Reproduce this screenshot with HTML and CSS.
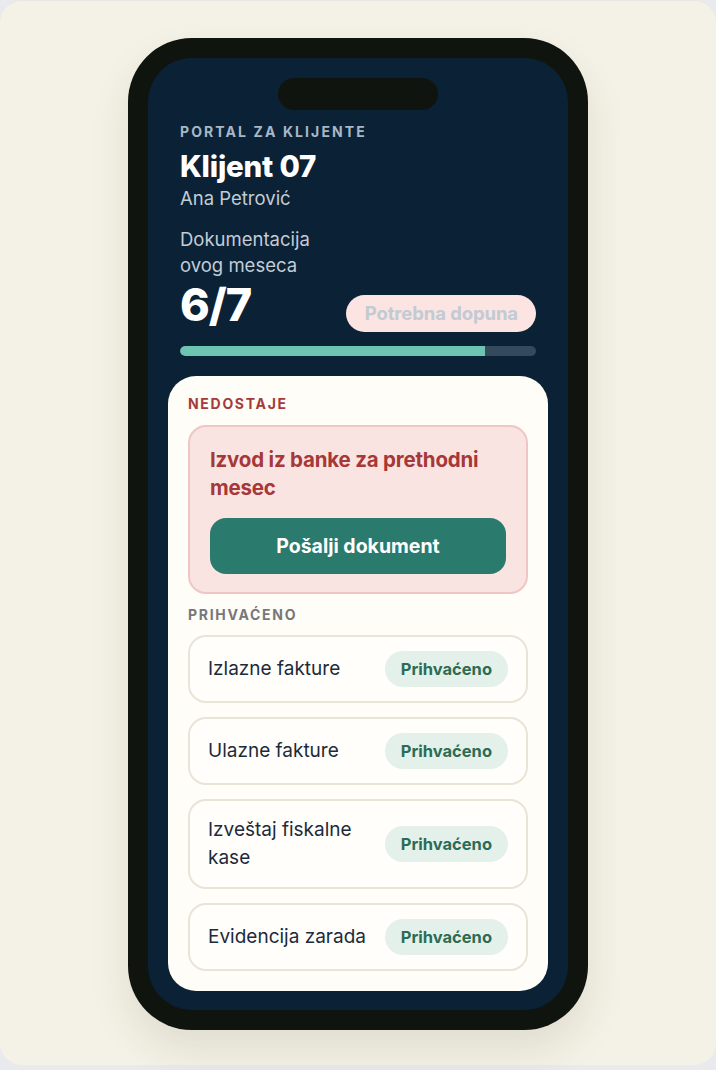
FILE: index.html
```html
<!DOCTYPE html>
<html lang="sr">
<head>
<meta charset="utf-8">
<title>Portal za klijente</title>
<link rel="stylesheet" href="styles.css">
</head>
<body>
<div class="stage">
  <div class="phone">
    <div class="screen">
      <div class="notch"></div>
      <header class="head">
        <div class="eyebrow">PORTAL ZA KLIJENTE</div>
        <h1 class="client">Klijent 07</h1>
        <div class="person">Ana Petrović</div>
        <div class="stat-row">
          <div class="stat">
            <div class="stat-label">Dokumentacija ovog meseca</div>
            <div class="stat-value">6/7</div>
          </div>
          <div class="status">Potrebna dopuna</div>
        </div>
        <div class="bar"><div class="bar-fill" style="width:85.7%"></div></div>
      </header>
      <main class="card">
        <div class="section missing-title">NEDOSTAJE</div>
        <div class="missing">
          <div class="missing-name">Izvod iz banke za prethodni mesec</div>
          <button class="send">Pošalji dokument</button>
        </div>
        <div class="section ok-title">PRIHVAĆENO</div>
        <div class="list">
          <div class="row"><span class="row-name">Izlazne fakture</span><span class="pill">Prihvaćeno</span></div>
          <div class="row"><span class="row-name">Ulazne fakture</span><span class="pill">Prihvaćeno</span></div>
          <div class="row"><span class="row-name">Izveštaj fiskalne kase</span><span class="pill">Prihvaćeno</span></div>
          <div class="row"><span class="row-name">Evidencija zarada</span><span class="pill">Prihvaćeno</span></div>
        </div>
      </main>
    </div>
  </div>
</div>
</body>
</html>
```

FILE: styles.css
```css
* { box-sizing: border-box; }
html, body { margin: 0; padding: 0; }
body {
  background: #e9eaee;
  font-family: Inter, "Noto Sans", sans-serif;
  width: 716px;
  height: 1070px;
  overflow: hidden;
}
.stage {
  width: 716px;
  height: 1065px;
  background: #f4f1e6;
  border-radius: 22px;
  border-top: 1px solid #e7e7e7;
  padding-top: 37px;
  display: flex;
  justify-content: center;
}
.phone {
  width: 460px;
  height: 992px;
  background: #10140f;
  border-radius: 64px;
  padding: 20px;
  box-shadow: 0 20px 40px rgba(60, 50, 20, 0.10);
}
.screen {
  height: 100%;
  background: #0b2236;
  border-radius: 44px;
  display: flex;
  flex-direction: column;
  padding: 20px 20px 20px;
}
.notch {
  align-self: center;
  width: 160px;
  height: 32px;
  background: #10140f;
  border-radius: 16px;
  flex: none;
}
.head {
  padding: 13px 12px 0;
  color: #fff;
}
.eyebrow {
  font-size: 14px;
  font-weight: 700;
  letter-spacing: 2.1px;
  color: #a8b7c7;
  line-height: 18px;
}
.client {
  margin: 8px 0 0;
  font-size: 29.5px;
  font-weight: 800;
  line-height: 34px;
  letter-spacing: -0.2px;
}
.person {
  font-size: 18.5px;
  color: #c3ccd6;
  line-height: 24px;
  margin-top: 3px;
}
.stat-row {
  display: flex;
  justify-content: space-between;
  align-items: flex-end;
  margin-top: 16px;
}
.stat { width: 150px; }
.stat-label {
  font-size: 18.5px;
  line-height: 26px;
  color: #c3ccd6;
}
.stat-value {
  font-size: 45px;
  font-weight: 800;
  line-height: 54px;
  letter-spacing: -1px;
}
.status {
  background: #fbe4e2;
  color: #c2cad3;
  font-size: 18.5px;
  font-weight: 700;
  border-radius: 19px;
  padding: 0 18px 0 19px;
  height: 37px;
  line-height: 37px;
  letter-spacing: -0.1px;
}
.bar {
  margin-top: 14px;
  height: 10px;
  background: #34495b;
  border-radius: 5px;
  overflow: hidden;
}
.bar-fill {
  height: 100%;
  background: #6cc4b1;
  border-radius: 5px 0 0 5px;
}
.card {
  margin-top: 20px;
  flex: 1;
  background: #fefdf8;
  border-radius: 28px;
  padding: 19px 20px 20px;
  display: flex;
  flex-direction: column;
}
.section {
  font-size: 14px;
  font-weight: 700;
  letter-spacing: 1.7px;
  line-height: 18px;
}
.missing-title { color: #a63a3a; }
.ok-title { color: #77777a; margin-top: 12px; }
.missing {
  margin-top: 12px;
  background: #fae4e2;
  border: 2px solid #f0c6c4;
  border-radius: 18px;
  padding: 19px 20px 18px;
}
.missing-name {
  font-size: 20.5px;
  font-weight: 700;
  line-height: 28px;
  color: #a63838;
  letter-spacing: -0.2px;
}
.send {
  display: block;
  width: 100%;
  margin-top: 16px;
  height: 56px;
  border: none;
  border-radius: 16px;
  background: #2a7a6e;
  color: #fff;
  font-family: inherit;
  font-size: 19.5px;
  font-weight: 700;
}
.list {
  margin-top: 11px;
  display: flex;
  flex-direction: column;
  gap: 14px;
}
.row {
  display: flex;
  align-items: center;
  justify-content: space-between;
  border: 2px solid #e9e4d8;
  border-radius: 18px;
  background: #fffefb;
  padding: 14px 18px;
  gap: 12px;
}
.row-name {
  font-size: 19px;
  line-height: 28px;
  padding: 1px 0;
  color: #1c2a3a;
  max-width: 160px;
}
.pill {
  flex: none;
  background: #e3f1ea;
  color: #2c6c55;
  font-size: 16.5px;
  font-weight: 700;
  height: 36px;
  line-height: 36px;
  padding: 0 16px;
  border-radius: 18px;
}
```
